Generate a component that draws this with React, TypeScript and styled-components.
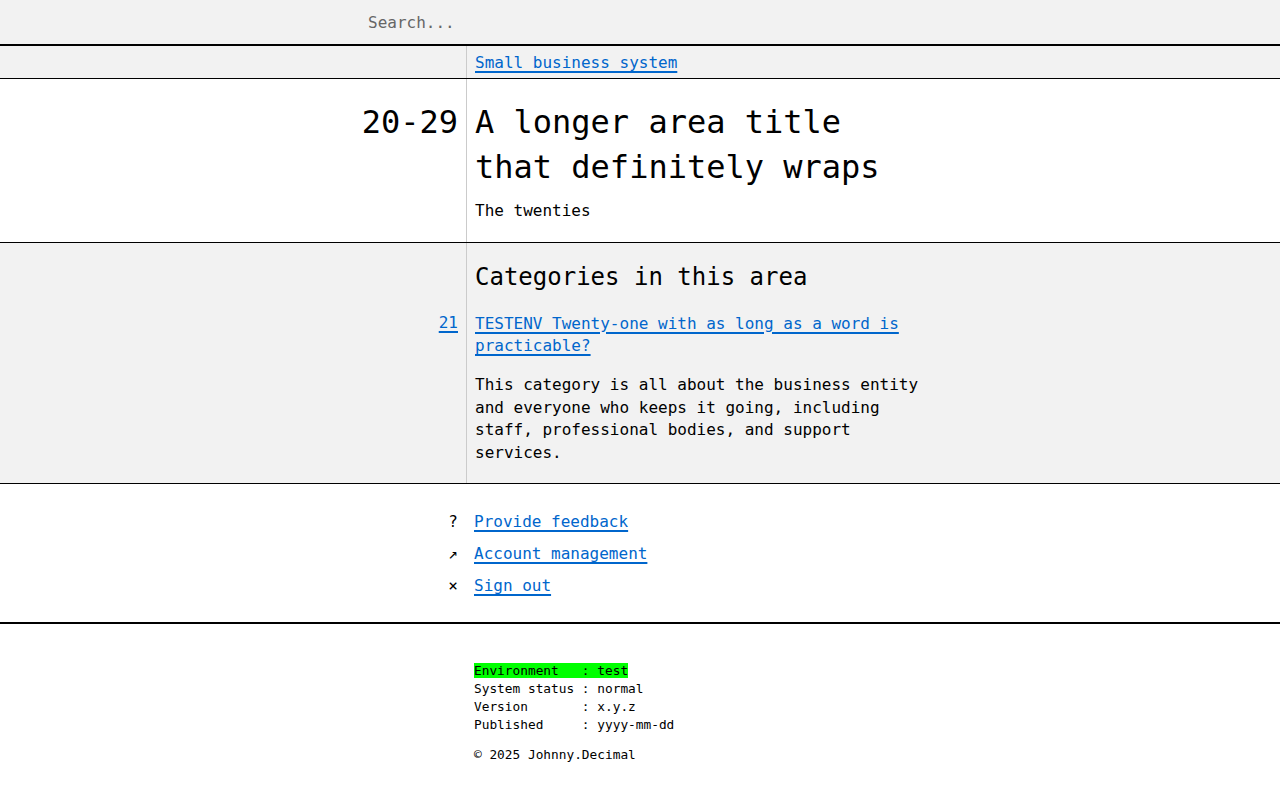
import * as React from 'react'
import styled, { createGlobalStyle } from 'styled-components'

const LeftWidth = 467

const GlobalStyle = createGlobalStyle`
  html, body {
    margin: 0;
    padding: 0;
    background: #fff;
    color: #000;
    font-family: "DejaVu Sans Mono", "Liberation Mono", monospace;
    font-size: 16px;
  }
`

const Header = styled.header`
  height: 44px;
  background: #f2f2f2;
  border-bottom: 2px solid #000;
  display: flex;
  align-items: center;
  padding-left: 368px;
`

const SearchInput = styled.input`
  border: none;
  outline: none;
  background: transparent;
  font: inherit;
  color: #000;
  padding: 0;
  width: 400px;

  &::placeholder {
    color: #666;
  }
`

const Section = styled.section<{ shaded?: boolean }>`
  display: grid;
  grid-template-columns: ${LeftWidth}px 1fr;
  background: ${p => (p.shaded ? '#f2f2f2' : '#fff')};
  border-bottom: 1px solid #000;
`

const Left = styled.div<{ pt?: number; pb?: number }>`
  border-right: 1px solid #cbcbcb;
  text-align: right;
  padding: ${p => p.pt || 0}px 8px ${p => p.pb || 0}px 0;
`

const Right = styled.div<{ pt?: number; pb?: number }>`
  padding: ${p => p.pt || 0}px 8px ${p => p.pb || 0}px 8px;
  min-width: 0;
`

const Link = styled.a`
  color: #0066cc;
  text-decoration: underline;
  text-decoration-thickness: 2px;
  text-underline-offset: 3px;
`

const Crumb = styled.div`
  line-height: 22px;
`

const AreaNumber = styled.div`
  font-size: 32px;
  line-height: 44.8px;
`

const AreaTitle = styled.h1`
  margin: 0;
  font-size: 32px;
  font-weight: normal;
  line-height: 44.8px;
  max-width: 450px;
`

const Subtitle = styled.p`
  margin: 10px 0 0;
  line-height: 22.4px;
`

const SectionHeading = styled.h2`
  margin: 0;
  font-size: 24px;
  font-weight: normal;
  line-height: 33.6px;
`

const CategoryNumber = styled.div`
  line-height: 22.4px;
`

const CategoryLink = styled.div`
  margin-top: 18px;
  line-height: 22.4px;
  max-width: 450px;
`

const Description = styled.p`
  margin: 17px 0 0;
  line-height: 22.4px;
  max-width: 450px;
`

const LinksSection = styled.nav`
  border-bottom: 2px solid #000;
  padding: 22px 0 20px;
`

const LinkItem = styled.div`
  display: grid;
  grid-template-columns: 466px 1fr;
  height: 32px;
  line-height: 32px;
`

const Glyph = styled.span`
  text-align: right;
  padding-right: 8px;
`

const LinkText = styled.span`
  padding-left: 8px;
`

const Footer = styled.footer`
  display: grid;
  grid-template-columns: 466px 1fr;
  padding: 38px 0 30px;
`

const Info = styled.div`
  grid-column: 2;
  padding-left: 8px;
  font-size: 12.8px;
  line-height: 18px;
  white-space: pre;
`

const Highlight = styled.span`
  background: #00ff00;
`

const Copyright = styled.div`
  margin-top: 12px;
`

const App: React.FC = () => {
  return (
    <>
      <GlobalStyle />
      <Header>
        <SearchInput placeholder="Search..." />
      </Header>

      <Section shaded>
        <Left pt={6} pb={4} />
        <Right pt={6} pb={4}>
          <Crumb>
            <Link href="#">Small business system</Link>
          </Crumb>
        </Right>
      </Section>

      <Section>
        <Left pt={21} pb={20}>
          <AreaNumber>20-29</AreaNumber>
        </Left>
        <Right pt={21} pb={20}>
          <AreaTitle>A longer area title that definitely wraps</AreaTitle>
          <Subtitle>The twenties</Subtitle>
        </Right>
      </Section>

      <Section shaded>
        <Left pt={69} pb={19}>
          <CategoryNumber>
            <Link href="#">21</Link>
          </CategoryNumber>
        </Left>
        <Right pt={18} pb={19}>
          <SectionHeading>Categories in this area</SectionHeading>
          <CategoryLink>
            <Link href="#">TESTENV Twenty-one with as long as a word is practicable?</Link>
          </CategoryLink>
          <Description>
            This category is all about the business entity and everyone who keeps it going,
            including staff, professional bodies, and support services.
          </Description>
        </Right>
      </Section>

      <LinksSection>
        <LinkItem>
          <Glyph>?</Glyph>
          <LinkText>
            <Link href="#">Provide feedback</Link>
          </LinkText>
        </LinkItem>
        <LinkItem>
          <Glyph>↗</Glyph>
          <LinkText>
            <Link href="#">Account management</Link>
          </LinkText>
        </LinkItem>
        <LinkItem>
          <Glyph>×</Glyph>
          <LinkText>
            <Link href="#">Sign out</Link>
          </LinkText>
        </LinkItem>
      </LinksSection>

      <Footer>
        <Info>
          <Highlight>{'Environment   : test'}</Highlight>
          {'\nSystem status : normal\nVersion       : x.y.z\nPublished     : yyyy-mm-dd'}
          <Copyright>© 2025 Johnny.Decimal</Copyright>
        </Info>
      </Footer>
    </>
  )
}

export default App
